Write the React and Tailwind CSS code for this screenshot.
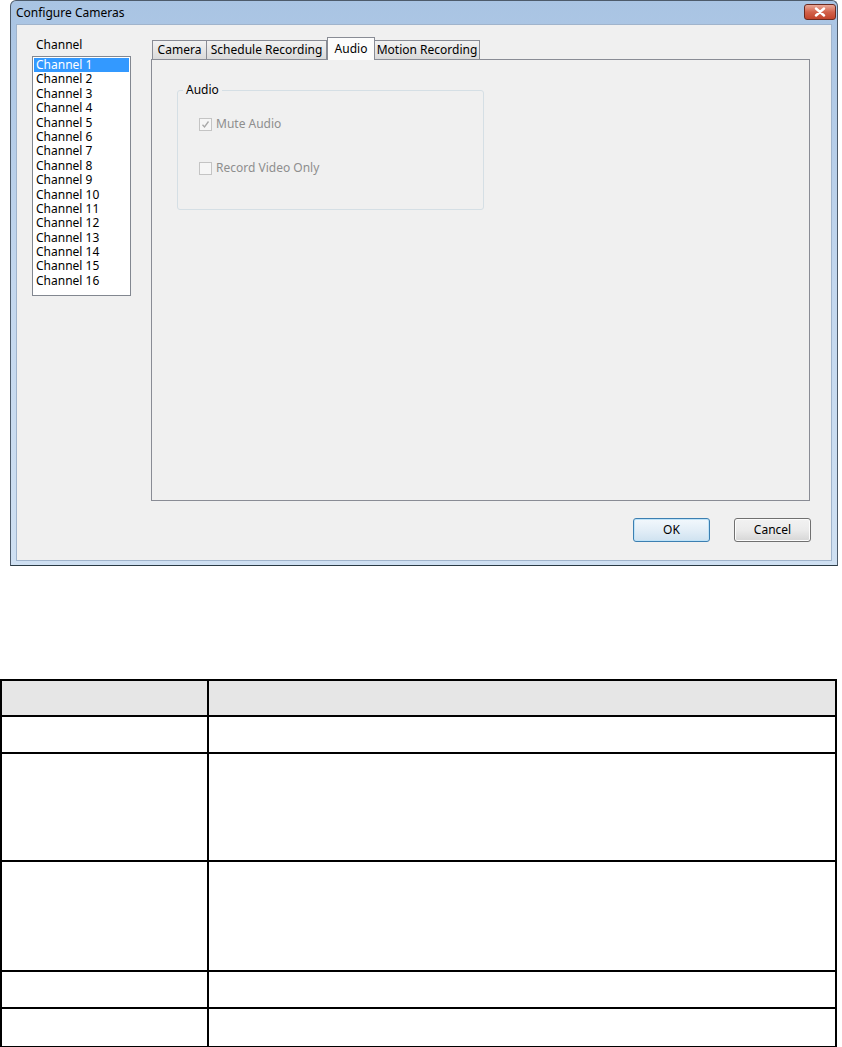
import React from "react";

const channels = Array.from({ length: 16 }, (_, i) => `Channel ${i + 1}`);

const tabs = [
  { label: "Camera", w: "w-[55px]" },
  { label: "Schedule Recording", w: "w-[121px]" },
  { label: "Audio", w: "w-[48px]", active: true },
  { label: "Motion Recording", w: "w-[106px]" },
];

function Check({ checked, label }) {
  return (
    <div className="flex items-center h-[16px]">
      <div className="w-[13px] h-[13px] border border-[#c4c4c4] bg-[#f6f6f6] flex items-center justify-center">
        {checked && (
          <svg width="9" height="9" viewBox="0 0 9 9">
            <path d="M1.5 4.8 L3.5 7 L7.5 1.5" fill="none" stroke="#a8a8a8" strokeWidth="1.3" />
          </svg>
        )}
      </div>
      <span className="ml-[4px] text-[#8e8e8e]">{label}</span>
    </div>
  );
}

function Dialog() {
  return (
    <div className="ml-[10px] w-[828px] h-[566px] rounded-t-[6px] border border-[#4d5b6b] border-b-[#2a3a44] bg-gradient-to-b from-[#a9c4e3] via-[#c3d7ee] to-[#cfe0f2] flex flex-col">
      {/* title bar */}
      <div className="h-[23px] flex items-center pl-[5px] pr-[1px] shrink-0">
        <span className="text-[12px] text-black">Configure Cameras</span>
        <div className="ml-auto w-[32px] h-[16px] mt-[-2px] rounded-[3px] border border-[#6b2a20] bg-gradient-to-b from-[#e8a898] via-[#d2624b] to-[#c2432b] flex items-center justify-center">
          <svg width="12" height="10" viewBox="0 0 12 10">
            <path d="M2 1.5 L10 8.5 M10 1.5 L2 8.5" stroke="#ffffff" strokeWidth="2.4" strokeLinecap="round" />
          </svg>
        </div>
      </div>

      {/* client area */}
      <div className="mx-[5px] mb-[4px] flex-1 bg-[#f0f0f0] border border-[#a0b4cc] flex flex-col">
        <div className="flex">
          {/* channel list */}
          <div className="ml-[15px] w-[99px] flex flex-col">
            <div className="mt-[11px] h-[18px] pl-[4px] leading-[18px]">Channel</div>
            <div className="mt-[2px] h-[240px] border border-[#828790] bg-white p-[1px]">
              {channels.map((c, i) => (
                <div
                  key={c}
                  className={
                    "h-[14.4px] leading-[14.4px] pl-[2px] " +
                    (i === 0 ? "bg-[#3399ff] text-white" : "text-black")
                  }
                >
                  {c}
                </div>
              ))}
            </div>
          </div>

          {/* tabs */}
          <div className="ml-[20px] w-[659px] flex flex-col">
            <div className="mt-[12px] h-[22px] flex items-end pl-[1px] relative z-10">
              {tabs.map((t) =>
                t.active ? (
                  <div
                    key={t.label}
                    className={`${t.w} h-[23px] mb-[-1px] border border-b-0 border-[#898c95] bg-[#fcfcfc] flex items-center justify-center`}
                  >
                    {t.label}
                  </div>
                ) : (
                  <div
                    key={t.label}
                    className={`${t.w} h-[19px] border border-b-0 border-[#898c95] -ml-px first:ml-0 bg-gradient-to-b from-[#f2f2f2] to-[#dadada] flex items-center justify-center`}
                  >
                    {t.label}
                  </div>
                )
              )}
            </div>
            <div className="h-[442px] border border-[#898c95] bg-[#f0f0f0] pt-[30px] pl-[25px]">
              <div className="relative w-[307px] h-[120px] border border-[#d5dfe5] rounded-[3px]">
                <span className="absolute left-[5px] top-[-10px] px-[3px] bg-[#f0f0f0] leading-[18px]">Audio</span>
                <div className="pl-[21px] pt-[25px] flex flex-col gap-[28px]">
                  <Check checked label="Mute Audio" />
                  <Check label="Record Video Only" />
                </div>
              </div>
            </div>
          </div>
        </div>

        {/* buttons */}
        <div className="mt-[17px] flex justify-end pr-[20px] gap-[24px]">
          <button className="w-[77px] h-[24px] rounded-[3px] border border-[#3c7fb1] bg-gradient-to-b from-[#f2f8fc] via-[#e3eef7] to-[#cfe2f0] shadow-[inset_0_0_0_1px_#bfe3f8]">
            OK
          </button>
          <button className="w-[77px] h-[24px] rounded-[3px] border border-[#707070] bg-gradient-to-b from-[#f2f2f2] via-[#ebebeb] to-[#d6d6d6] shadow-[inset_0_0_0_1px_#fcfcfc]">
            Cancel
          </button>
        </div>
      </div>
    </div>
  );
}

function InfoTable() {
  const rows = ["h-[37px]", "h-[108px]", "h-[110px]", "h-[37px]", "h-[37px]"];
  return (
    <div className="mt-[113px] w-[837px] border-2 border-black">
      <div className="flex h-[36px] bg-[#e6e6e6] border-b-2 border-black">
        <div className="w-[207px] border-r-2 border-black" />
        <div className="flex-1" />
      </div>
      {rows.map((h, i) => (
        <div key={i} className={`flex ${h} ${i < rows.length - 1 ? "border-b-2 border-black" : ""}`}>
          <div className="w-[207px] border-r-2 border-black" />
          <div className="flex-1" />
        </div>
      ))}
    </div>
  );
}

export default function App() {
  return (
    <div className="w-[842px] h-[1047px] bg-white font-['Noto_Sans',sans-serif] text-[12px] text-black overflow-hidden">
      <Dialog />
      <InfoTable />
    </div>
  );
}
